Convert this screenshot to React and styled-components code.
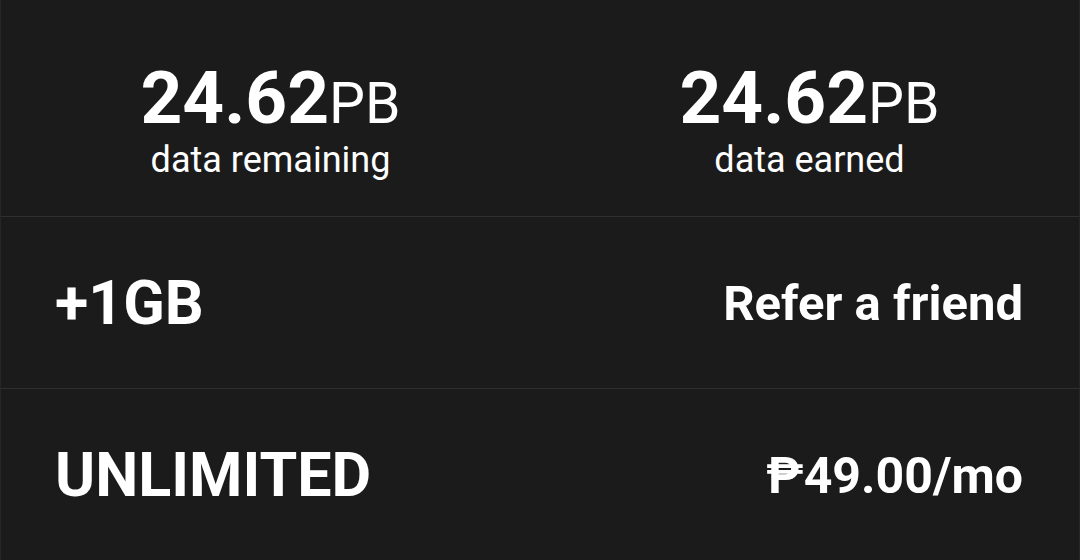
import React from "react";
import styled, { createGlobalStyle } from "styled-components";

const Global = createGlobalStyle`
  html, body { margin: 0; padding: 0; background: #1b1b1b; }
  body { font-family: Roboto, "Liberation Sans", sans-serif; color: #fff; }
`;

const Screen = styled.div`
  width: 1080px;
  height: 560px;
  display: flex;
  flex-direction: column;
  background: #1b1b1b;
  border-left: 1px solid #262626;
  border-right: 1px solid #262626;
  box-sizing: border-box;
`;

const Stats = styled.section`
  height: 217px;
  display: grid;
  grid-template-columns: 1fr 1fr;
  align-items: start;
  padding-top: 62px;
  box-sizing: border-box;
  border-bottom: 1px solid #2f2f2f;
`;

const Stat = styled.div`
  display: flex;
  flex-direction: column;
  align-items: center;
`;

const Amount = styled.div`
  display: flex;
  align-items: baseline;
  line-height: 1;
`;

const Figure = styled.span`
  font-size: 73px;
  font-weight: 700;
`;

const Unit = styled.span`
  font-size: 57px;
  font-weight: 400;
`;

const Caption = styled.div`
  font-size: 36px;
  margin-top: 4px;
  line-height: 1.2;
`;

const Row = styled.div`
  flex: 1;
  display: flex;
  align-items: center;
  justify-content: space-between;
  padding: 2px 56px 0 54px;
  border-bottom: ${(p) => (p.$last ? "none" : "1px solid #2f2f2f")};
`;

const Label = styled.span`
  font-size: ${(p) => p.$size || 61}px;
  font-weight: 700;
  line-height: 1;
`;

export default function App() {
  return (
    <>
      <Global />
      <Screen>
        <Stats>
          <Stat>
            <Amount>
              <Figure>24.62</Figure>
              <Unit>PB</Unit>
            </Amount>
            <Caption>data remaining</Caption>
          </Stat>
          <Stat>
            <Amount>
              <Figure>24.62</Figure>
              <Unit>PB</Unit>
            </Amount>
            <Caption>data earned</Caption>
          </Stat>
        </Stats>
        <Row>
          <Label>+1GB</Label>
          <Label $size={49}>Refer a friend</Label>
        </Row>
        <Row $last>
          <Label>UNLIMITED</Label>
          <Label $size={50}>₱49.00/mo</Label>
        </Row>
      </Screen>
    </>
  );
}
